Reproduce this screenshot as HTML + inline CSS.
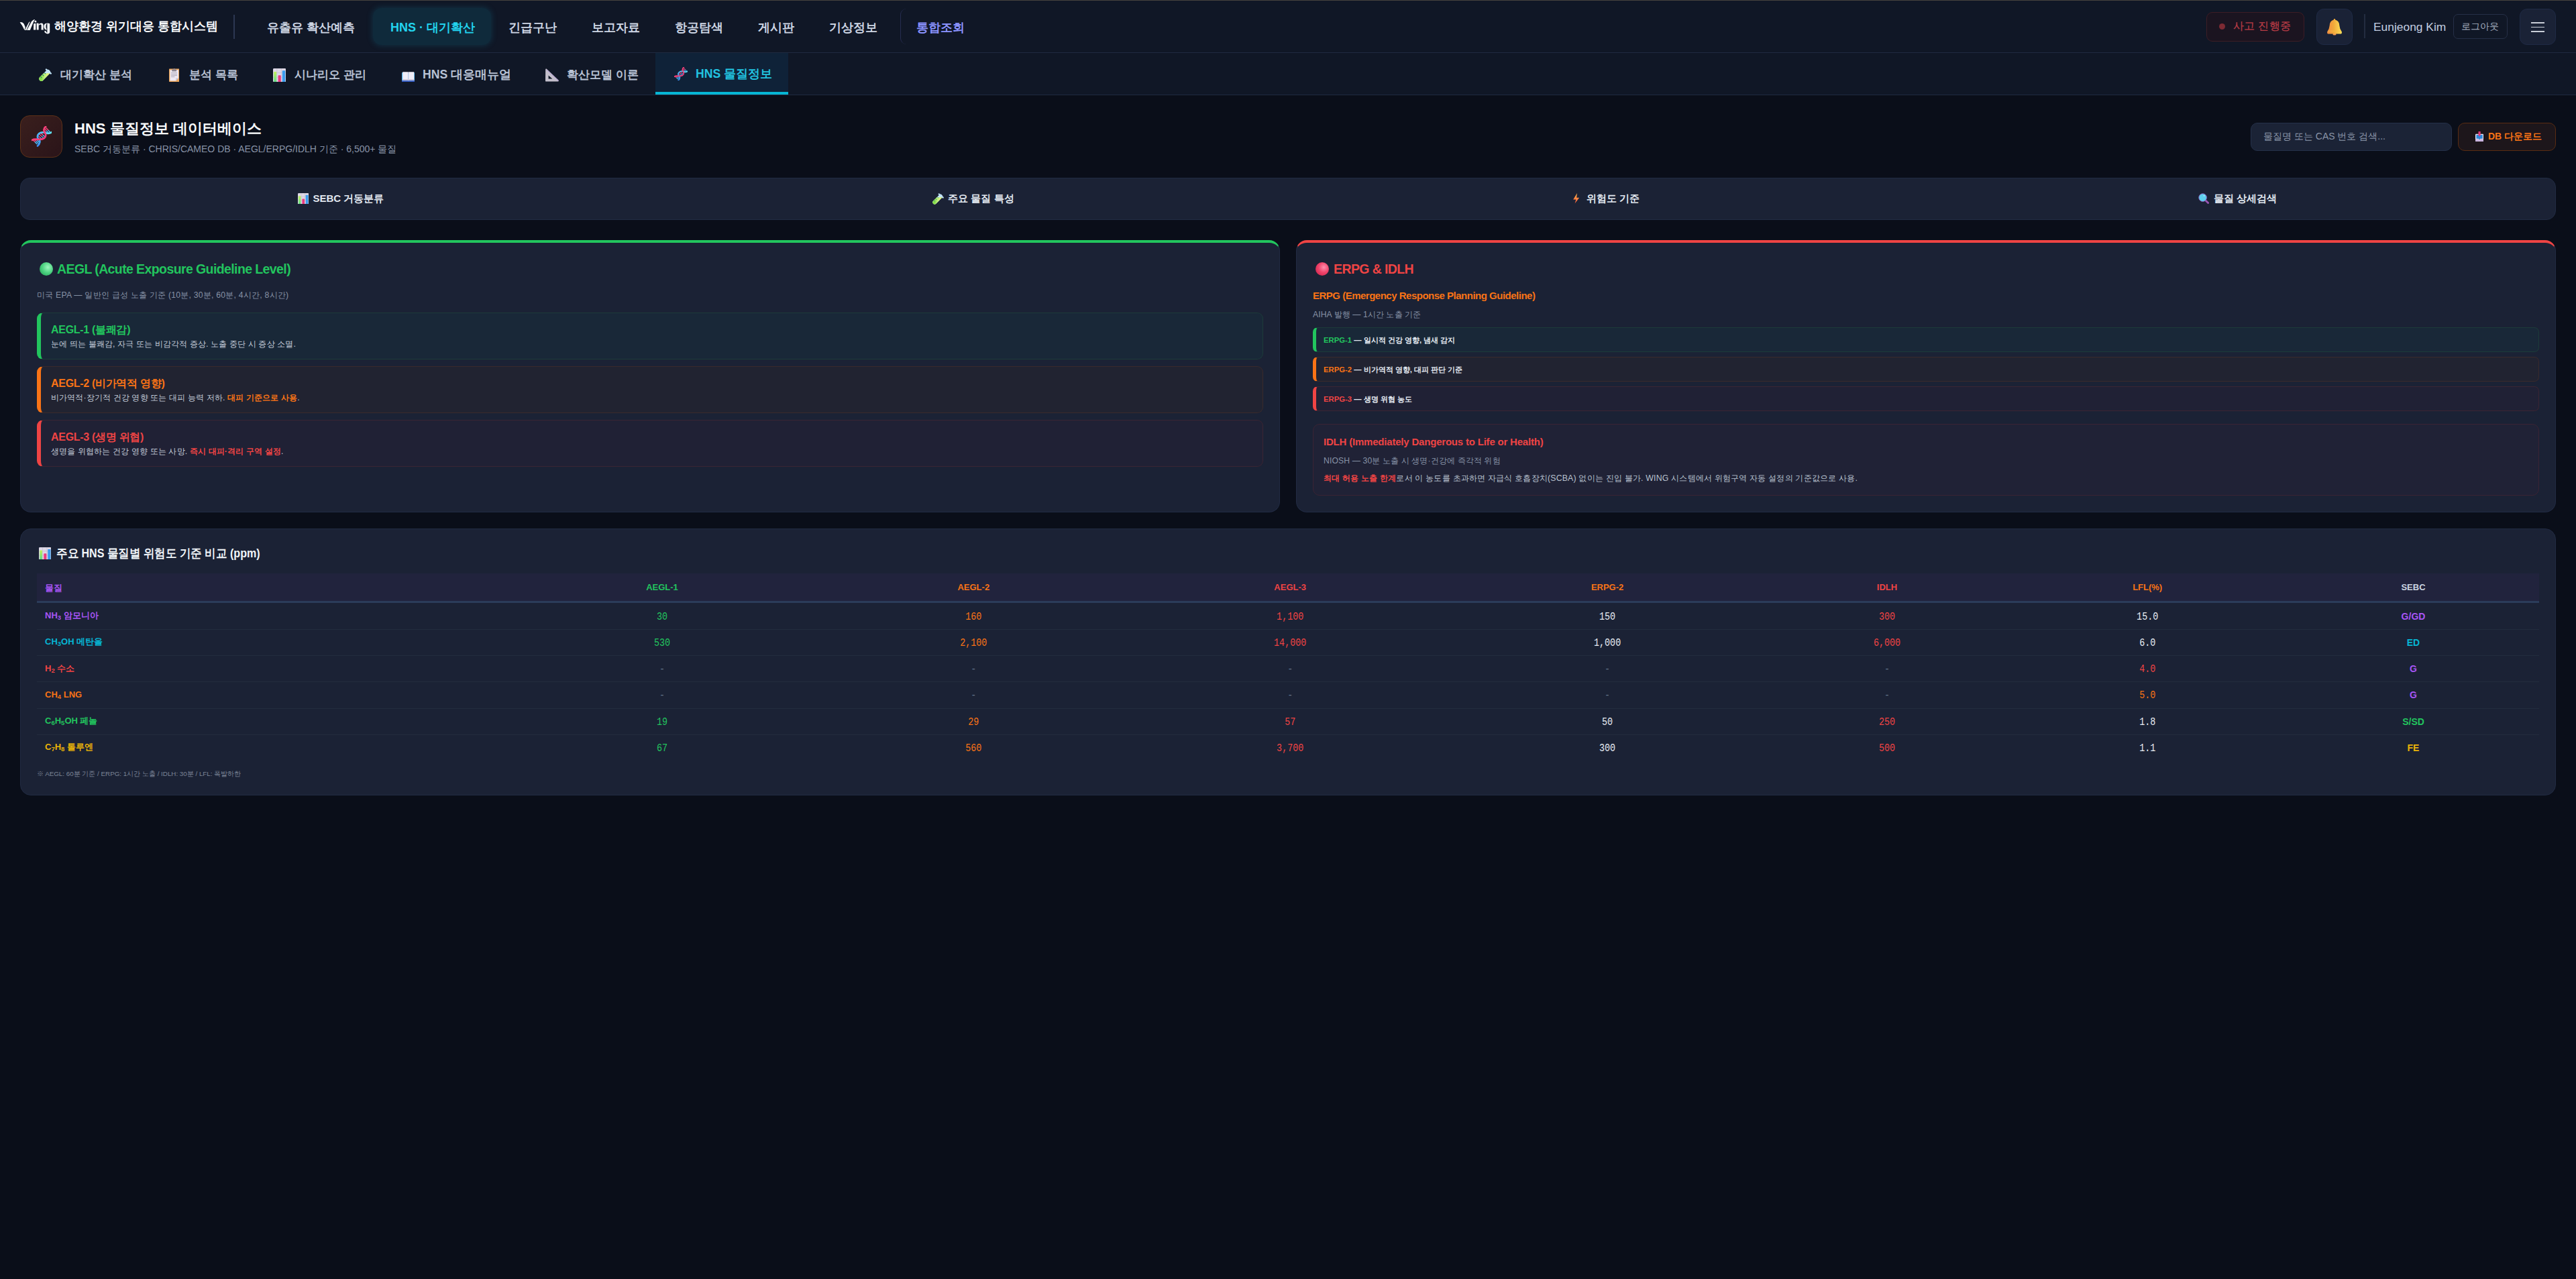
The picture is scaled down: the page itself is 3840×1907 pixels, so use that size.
<!DOCTYPE html>
<html lang="ko">
<head>
<meta charset="utf-8">
<title>WING HNS 물질정보</title>
<style>
*{box-sizing:border-box;margin:0;padding:0}
html,body{width:3840px;height:1907px;overflow:hidden;background:#0a0e19;font-family:"Liberation Sans",sans-serif;color:#e2e8f0}
.a{position:absolute}
.nw{position:absolute;white-space:nowrap}
.sx{display:inline-block;transform-origin:0 50%}
</style>
</head>
<body>
<div class="a" style="left:0px;top:0px;width:3840px;height:1px;background:#46433f"></div>
<div class="a" style="left:0px;top:1px;width:3840px;height:77px;background:#101726"></div>
<div class="a" style="left:0px;top:78px;width:3840px;height:1px;background:#1f2a40"></div>
<div class="a" style="left:0px;top:79px;width:3840px;height:62px;background:#101726"></div>
<div class="a" style="left:0px;top:141px;width:3840px;height:1px;background:#1f2a40"></div>
<svg class="a" style="left:26px;top:26px" width="54" height="28" viewBox="0 0 54 28"><g fill="#f8fafc">
<path d="M3.6,7.2 Q7.6,6.0 9.6,9.4 L11.8,14.4 L10.6,18.9 Q7.4,11.6 3.6,7.2 Z"/>
<path d="M10.9,18.9 L16.6,8.0 Q17.6,6.6 18.8,6.3 L13.4,18.9 Z"/>
<path d="M14.0,18.9 L18.8,18.9 L23.6,7.4 Q24.8,4.2 26.2,2.9 Q22.6,3.2 20.6,6.8 Z"/>
<circle cx="26.9" cy="6.0" r="1.5"/>
<path d="M24.2,9.2 L27.4,8.8 L27.3,18.6 L24.0,18.6 Z"/>
<path d="M28.6,8.6 L31.6,8.8 L31.6,18.6 L28.8,18.6 Z"/>
<path d="M31.6,10.4 Q33.6,8.4 36.0,8.6 Q38.6,9.0 38.6,11.8 L38.6,18.6 L35.6,18.6 L35.6,11.8 Q35.4,10.4 34.2,10.6 Q32.6,10.9 31.6,12.4 Z"/>
<path d="M43.2,8.5 Q39.3,9.4 39.3,13.6 Q39.5,18.0 43.6,18.6 L43.6,17.4 Q42.4,16.4 42.4,13.6 Q42.4,10.0 43.8,9.4 Z"/>
<path d="M44.4,8.3 L48.2,9.2 L48.2,22.2 Q47.8,24.2 45.2,24.4 Q41.0,24.4 40.0,20.6 L42.2,20.0 Q43.0,22.6 44.4,22.8 Z"/>
<path d="M34.8,17.2 L43.6,18.9 L43.6,19.3 L34.8,17.6 Z" opacity="0.6"/>
</g></svg>
<div id="h_title" class="nw" style="left:81px;top:23px;font-size:17.9px;line-height:32px;font-weight:700;color:#f8fafc">해양환경 위기대응 통합시스템</div>
<div class="a" style="left:348px;top:22px;width:2px;height:36px;background:#2c3752"></div>
<div class="a" style="left:556px;top:12px;width:176px;height:55px;border-radius:13px;background:#0f2a3b;box-shadow:0 0 8px 1px rgba(20,110,140,0.30)"></div>
<div class="a" style="left:1342px;top:13px;width:120px;height:53px;border-left:1.5px solid #262d50;border-radius:9px 0 0 9px"></div>
<div id="nav0" class="nw" style="left:398px;top:25px;font-size:18px;line-height:32px;font-weight:700;color:#cdd5e3">유출유 확산예측</div>
<div id="nav1" class="nw" style="left:582px;top:25px;font-size:18px;line-height:32px;font-weight:700;color:#22d3ee">HNS<span style="padding:0 5px">·</span>대기확산</div>
<div id="nav2" class="nw" style="left:758px;top:25px;font-size:18px;line-height:32px;font-weight:700;color:#cdd5e3">긴급구난</div>
<div id="nav3" class="nw" style="left:882px;top:25px;font-size:18px;line-height:32px;font-weight:700;color:#cdd5e3">보고자료</div>
<div id="nav4" class="nw" style="left:1006px;top:25px;font-size:18px;line-height:32px;font-weight:700;color:#cdd5e3">항공탐색</div>
<div id="nav5" class="nw" style="left:1130px;top:25px;font-size:18px;line-height:32px;font-weight:700;color:#cdd5e3">게시판</div>
<div id="nav6" class="nw" style="left:1236px;top:25px;font-size:18px;line-height:32px;font-weight:700;color:#cdd5e3">기상정보</div>
<div id="nav7" class="nw" style="left:1366px;top:25px;font-size:18px;line-height:32px;font-weight:700;color:#8b93ff">통합조회</div>
<div class="a" style="left:3289px;top:18px;width:146px;height:44px;border-radius:9px;background:#1b1420;border:1.5px solid #3d1d25"></div>
<div class="a" style="left:3308px;top:35px;width:9.2px;height:9.2px;border-radius:50%;background:#7d2a33"></div>
<div id="h_acc" class="nw" style="left:3328.5px;top:23.8px;font-size:16px;line-height:30px;color:#b83c46;letter-spacing:0.5px;-webkit-text-stroke:0.25px #b83c46">사고 진행중</div>
<div class="a" style="left:3453px;top:13px;width:54px;height:54px;border-radius:11px;background:#1a2236;border:1.5px solid #1f2a45"></div>
<svg class="a" style="left:3469px;top:28px" width="22" height="24.7" viewBox="0 0 22 24.7" preserveAspectRatio="none"><defs><linearGradient id="bgb" x1="0" y1="0" x2="1" y2="0"><stop offset="0" stop-color="#f08a40"/><stop offset="0.45" stop-color="#f2aa3a"/><stop offset="1" stop-color="#ffe35a"/></linearGradient></defs><ellipse cx="11" cy="23" rx="2.6" ry="1.6" fill="#f29a5a"/><path d="M11,0 Q12.2,0 12.2,1.4 Q18.2,3 18.4,10.4 Q18.8,15.6 22,19.8 Q22,22.6 20.6,22.6 H1.4 Q0,22.6 0,19.8 Q3.2,15.6 3.6,10.4 Q3.8,3 9.8,1.4 Q9.8,0 11,0 Z" fill="url(#bgb)"/><rect x="1.2" y="17.6" width="19.6" height="1.6" fill="#f6c04a" opacity="0.5"/></svg>
<div class="a" style="left:3524px;top:21px;width:1.5px;height:36px;background:#232c40"></div>
<div id="h_user" class="nw" style="left:3538px;top:25px;font-size:17.4px;line-height:30px;color:#c3cee0">Eunjeong Kim</div>
<div class="a" style="left:3657px;top:21px;width:81px;height:37px;border-radius:7px;border:1.5px solid #263047"></div>
<div id="h_logout" class="nw" style="left:3669px;top:24px;font-size:14.2px;line-height:30px;color:#a7b0c0">로그아웃</div>
<div class="a" style="left:3756px;top:13px;width:54px;height:54px;border-radius:11px;background:#1a2236;border:1.5px solid #1f2a45"></div>
<div class="a" style="left:3773px;top:33px;width:20px;height:1.8px;background:#c9ced8"></div>
<div class="a" style="left:3773px;top:39.5px;width:20px;height:1.8px;background:#c9ced8"></div>
<div class="a" style="left:3773px;top:46px;width:20px;height:1.8px;background:#c9ced8"></div>
<div class="a" style="left:977px;top:79px;width:198px;height:62px;background:#0f2238"></div>
<div class="a" style="left:977px;top:137px;width:198px;height:4px;background:#06b6d4"></div>
<svg class="a" style="left:57.9px;top:102.4px" width="19.2" height="19.4" viewBox="0 0 20 20" preserveAspectRatio="none"><defs><linearGradient id="ttg57" x1="0" y1="0" x2="1" y2="0"><stop offset="0" stop-color="#86dc48"/><stop offset="0.5" stop-color="#c0f07e"/><stop offset="1" stop-color="#e4f27a"/></linearGradient><clipPath id="ttc57"><rect x="0" y="7.4" width="20" height="13"/></clipPath></defs><line x1="3.8" y1="16.0" x2="14.2" y2="5.6" stroke="#c6e6f8" stroke-width="7" stroke-linecap="round"/><line x1="11.4" y1="1.6" x2="18.6" y2="7.8" stroke="#bfe2f6" stroke-width="2.4" stroke-linecap="round"/><line x1="3.8" y1="16.0" x2="14.2" y2="5.6" stroke="url(#ttg57)" stroke-width="7" stroke-linecap="round" clip-path="url(#ttc57)"/><g stroke="#1f7f78" stroke-width="1.1" stroke-linecap="round"><line x1="3.0" y1="13.0" x2="4.2" y2="14.2"/><line x1="6.0" y1="10.0" x2="7.2" y2="11.2"/><line x1="9.0" y1="7.0" x2="10.2" y2="8.2"/></g></svg>
<div id="snt0" class="nw" style="left:90px;top:95.5px;font-size:17.15px;line-height:30px;font-weight:700;color:#b8c2d4">대기확산 분석</div>
<svg class="a" style="left:251.9px;top:102px" width="15.4" height="20" viewBox="0 0 15.4 20" preserveAspectRatio="none"><rect x="0" y="0.6" width="15.4" height="19.4" rx="0.8" fill="#eaa55c"/><path d="M1.4,2.2 H14 V14.4 L10.2,18.4 H1.4 Z" fill="#ece8f4"/><path d="M10.2,18.4 L14,14.4 H10.6 Q10.2,14.4 10.2,15 Z" fill="#c9c3d6"/><rect x="4.2" y="1.4" width="7" height="3" rx="0.6" fill="#8d8794"/><rect x="6.9" y="0" width="1.6" height="1.8" fill="#8d8794"/><g fill="#a9a3b3"><rect x="3" y="6.2" width="9" height="0.9"/><rect x="3" y="8.3" width="9" height="0.9"/><rect x="3" y="10.2" width="9" height="0.9"/><rect x="3" y="12.2" width="5.4" height="0.9"/></g></svg>
<div id="snt1" class="nw" style="left:282px;top:95.5px;font-size:17.15px;line-height:30px;font-weight:700;color:#b8c2d4">분석 목록</div>
<svg class="a" style="left:406.9px;top:101.8px" width="19.2" height="20.2" viewBox="0 0 19.2 20" preserveAspectRatio="none"><defs><linearGradient id="cg406_9" x1="0" y1="0" x2="0" y2="1"><stop offset="0" stop-color="#c2f25c"/><stop offset="1" stop-color="#5ddc86"/></linearGradient></defs><rect x="0" y="0" width="19.2" height="20" rx="1.4" fill="#ddd8e6"/><g stroke="#bdb6c8" stroke-width="0.5"><line x1="0" y1="6.4" x2="19.2" y2="6.4"/><line x1="0" y1="13.2" x2="19.2" y2="13.2"/><line x1="5.8" y1="0" x2="5.8" y2="20"/><line x1="12.4" y1="0" x2="12.4" y2="20"/></g><rect x="1.2" y="5" width="4" height="15" rx="0.6" fill="url(#cg406_9)"/><rect x="7.6" y="10.2" width="4.2" height="9.8" rx="0.8" fill="#ec3a80"/><rect x="13.8" y="3.2" width="4.4" height="16.8" rx="0.6" fill="#3a9cee"/></svg>
<div id="snt2" class="nw" style="left:439px;top:95.5px;font-size:17.15px;line-height:30px;font-weight:700;color:#b8c2d4">시나리오 관리</div>
<svg class="a" style="left:598.9px;top:106.7px" width="19.4" height="15.5" viewBox="0 0 19.4 15.6" preserveAspectRatio="none"><path d="M0,1.2 H19.4 V15 H10.4 L9.7,15.6 L9,15 H0 Z" fill="#4fb6f2"/><path d="M0,13.2 H19.4 V15 H10.4 L9.7,15.6 L9,15 H0 Z" fill="#3a62c8"/><path d="M1.2,0.2 H9.3 V13.4 L9.7,13.9 L10.1,13.4 V0.2 H18.2 V12.8 H10.6 L9.7,13.8 L8.8,12.8 H1.2 Z" fill="#efedf7"/><rect x="1.2" y="11.2" width="17" height="1.6" fill="#c7bfd6"/><rect x="9.3" y="0.2" width="0.8" height="13" fill="#cfcae0"/></svg>
<div id="snt3" class="nw" style="left:630px;top:95.5px;font-size:17.6px;line-height:30px;font-weight:700;color:#b8c2d4">HNS 대응매뉴얼</div>
<svg class="a" style="left:813px;top:102px" width="20" height="19.8" viewBox="0 0 20 20" preserveAspectRatio="none"><path d="M0.2,1.4 Q0.4,0 1.6,0.6 L19.6,17.6 Q20.4,19.8 18.6,19.8 H1.2 Q0,19.8 0,18.6 Z M4.6,10.6 V15.6 H10.4 Z" fill="#c3bfcb" fill-rule="evenodd"/><circle cx="2.40" cy="2.60" r="0.55" fill="#a070f0"/><circle cx="4.45" cy="4.50" r="0.55" fill="#a070f0"/><circle cx="6.50" cy="6.40" r="0.55" fill="#a070f0"/><circle cx="8.55" cy="8.30" r="0.55" fill="#a070f0"/><circle cx="10.60" cy="10.20" r="0.55" fill="#a070f0"/><circle cx="12.65" cy="12.10" r="0.55" fill="#a070f0"/><circle cx="14.70" cy="14.00" r="0.55" fill="#a070f0"/><circle cx="16.75" cy="15.90" r="0.55" fill="#a070f0"/><circle cx="18.80" cy="17.80" r="0.55" fill="#a070f0"/></svg>
<div id="snt4" class="nw" style="left:845px;top:95.5px;font-size:17.15px;line-height:30px;font-weight:700;color:#b8c2d4">확산모델 이론</div>
<svg class="a" style="left:1004.5px;top:99.8px" width="20.5" height="20.5" viewBox="0 0 30 30" preserveAspectRatio="none"><defs><linearGradient id="dps" x1="0" y1="0" x2="1" y2="1"><stop offset="0" stop-color="#ff4a78"/><stop offset="1" stop-color="#f0367a"/></linearGradient><linearGradient id="dbs" x1="1" y1="0" x2="0" y2="1"><stop offset="0" stop-color="#62e8f6"/><stop offset="1" stop-color="#3a8ef8"/></linearGradient></defs><g stroke-width="1.5" stroke-linecap="butt"><line x1="19.4" y1="4.0" x2="22.00" y2="6.95" stroke="#f0467e"/><line x1="22.00" y1="6.95" x2="24.6" y2="9.9" stroke="#4ab8f6"/><line x1="18.6" y1="6.6" x2="20.30" y2="8.30" stroke="#f0467e"/><line x1="20.30" y1="8.30" x2="22.0" y2="10.0" stroke="#4ab8f6"/><line x1="21.2" y1="2.4" x2="24.40" y2="6.00" stroke="#f0467e"/><line x1="24.40" y1="6.00" x2="27.6" y2="9.6" stroke="#4ab8f6"/><line x1="11.0" y1="11.6" x2="14.80" y2="15.00" stroke="#f0467e"/><line x1="14.80" y1="15.00" x2="18.6" y2="18.4" stroke="#4ab8f6"/><line x1="9.6" y1="14.0" x2="12.50" y2="16.70" stroke="#f0467e"/><line x1="12.50" y1="16.70" x2="15.4" y2="19.4" stroke="#4ab8f6"/><line x1="13.4" y1="10.0" x2="16.80" y2="13.10" stroke="#f0467e"/><line x1="16.80" y1="13.10" x2="20.2" y2="16.2" stroke="#4ab8f6"/><line x1="3.4" y1="18.8" x2="6.80" y2="22.20" stroke="#f0467e"/><line x1="6.80" y1="22.20" x2="10.2" y2="25.6" stroke="#4ab8f6"/><line x1="6.4" y1="18.8" x2="8.70" y2="21.00" stroke="#f0467e"/><line x1="8.70" y1="21.00" x2="11.0" y2="23.2" stroke="#4ab8f6"/><line x1="1.6" y1="19.6" x2="4.90" y2="23.10" stroke="#f0467e"/><line x1="4.90" y1="23.10" x2="8.2" y2="26.6" stroke="#4ab8f6"/></g><g stroke-width="2.6" fill="none" stroke-linecap="round"><path d="M29.6,9 C27,11 22.6,11 19.3,9.6 C15.4,8.4 10.8,9.8 9.2,13.2 C8,16.2 9.4,18.6 11.3,19.5 C12.8,21.5 12.6,26 8.9,29.1" stroke="url(#dbs)"/><path d="M20.8,0.9 C18,2.6 17.2,7 19.3,9.6 C21.6,12 21.4,15.6 18.5,17.8 C16,19.6 13.6,19.6 11.3,19.5 C7.6,19.2 3,18.6 0.6,20.6" stroke="url(#dps)"/></g></svg>
<div id="snt5" class="nw" style="left:1037px;top:94.5px;font-size:17.6px;line-height:30px;font-weight:700;color:#22c3e0">HNS 물질정보</div>
<div class="a" style="left:30px;top:172px;width:63px;height:63px;border-radius:14px;background:linear-gradient(135deg,#3a1f1d,#2a1419);border:1.5px solid #5e3118"></div>
<svg class="a" style="left:46.5px;top:188.2px" width="30.5" height="30.5" viewBox="0 0 30 30" preserveAspectRatio="none"><defs><linearGradient id="dpp" x1="0" y1="0" x2="1" y2="1"><stop offset="0" stop-color="#ff4a78"/><stop offset="1" stop-color="#f0367a"/></linearGradient><linearGradient id="dbp" x1="1" y1="0" x2="0" y2="1"><stop offset="0" stop-color="#62e8f6"/><stop offset="1" stop-color="#3a8ef8"/></linearGradient></defs><g stroke-width="1.5" stroke-linecap="butt"><line x1="19.4" y1="4.0" x2="22.00" y2="6.95" stroke="#f0467e"/><line x1="22.00" y1="6.95" x2="24.6" y2="9.9" stroke="#4ab8f6"/><line x1="18.6" y1="6.6" x2="20.30" y2="8.30" stroke="#f0467e"/><line x1="20.30" y1="8.30" x2="22.0" y2="10.0" stroke="#4ab8f6"/><line x1="21.2" y1="2.4" x2="24.40" y2="6.00" stroke="#f0467e"/><line x1="24.40" y1="6.00" x2="27.6" y2="9.6" stroke="#4ab8f6"/><line x1="11.0" y1="11.6" x2="14.80" y2="15.00" stroke="#f0467e"/><line x1="14.80" y1="15.00" x2="18.6" y2="18.4" stroke="#4ab8f6"/><line x1="9.6" y1="14.0" x2="12.50" y2="16.70" stroke="#f0467e"/><line x1="12.50" y1="16.70" x2="15.4" y2="19.4" stroke="#4ab8f6"/><line x1="13.4" y1="10.0" x2="16.80" y2="13.10" stroke="#f0467e"/><line x1="16.80" y1="13.10" x2="20.2" y2="16.2" stroke="#4ab8f6"/><line x1="3.4" y1="18.8" x2="6.80" y2="22.20" stroke="#f0467e"/><line x1="6.80" y1="22.20" x2="10.2" y2="25.6" stroke="#4ab8f6"/><line x1="6.4" y1="18.8" x2="8.70" y2="21.00" stroke="#f0467e"/><line x1="8.70" y1="21.00" x2="11.0" y2="23.2" stroke="#4ab8f6"/><line x1="1.6" y1="19.6" x2="4.90" y2="23.10" stroke="#f0467e"/><line x1="4.90" y1="23.10" x2="8.2" y2="26.6" stroke="#4ab8f6"/></g><g stroke-width="2.6" fill="none" stroke-linecap="round"><path d="M29.6,9 C27,11 22.6,11 19.3,9.6 C15.4,8.4 10.8,9.8 9.2,13.2 C8,16.2 9.4,18.6 11.3,19.5 C12.8,21.5 12.6,26 8.9,29.1" stroke="url(#dbp)"/><path d="M20.8,0.9 C18,2.6 17.2,7 19.3,9.6 C21.6,12 21.4,15.6 18.5,17.8 C16,19.6 13.6,19.6 11.3,19.5 C7.6,19.2 3,18.6 0.6,20.6" stroke="url(#dpp)"/></g></svg>
<div id="p_title" class="nw" style="left:111px;top:176px;font-size:22px;line-height:32px;font-weight:700;color:#f8fafc">HNS 물질정보 데이터베이스</div>
<div id="p_sub" class="nw" style="left:111px;top:212px;font-size:14px;line-height:20px;color:#8792a6">SEBC 거동분류 · CHRIS/CAMEO DB · AEGL/ERPG/IDLH 기준 · 6,500+ 물질</div>
<div class="a" style="left:3355px;top:183px;width:300px;height:42px;border-radius:10px;background:#1b2336;border:1.5px solid #243049"></div>
<div id="p_search" class="nw" style="left:3374px;top:193px;font-size:14px;line-height:20px;color:#8b96a9">물질명 또는 CAS 번호 검색...</div>
<div class="a" style="left:3664px;top:183px;width:146px;height:42px;border-radius:10px;background:#1d161b;border:1.5px solid #5a2c12"></div>
<svg class="a" style="left:3690px;top:196px" width="12.2" height="15" viewBox="0 0 12.2 15" preserveAspectRatio="none"><rect x="0" y="3.8" width="12.2" height="11.2" rx="1" fill="#e6e2ef"/><path d="M1.4,5 H10.8 V10.8 H7.6 L6.1,12.4 L4.6,10.8 H1.4 Z" fill="#2e88dc"/><path d="M0,11.6 H4.4 L6.1,13 L7.8,11.6 H12.2 V14 Q12.2,15 11.2,15 H1 Q0,15 0,14 Z" fill="#c9b4e0"/><path d="M4.5,0 H7.7 V5.6 L6.1,7.4 L4.5,5.6 Z" fill="#e23a7a"/></svg>
<div id="p_dl" class="nw" style="left:3709px;top:193px;font-size:14px;line-height:20px;font-weight:700;color:#f97316">DB 다운로드</div>
<div class="a" style="left:30px;top:265px;width:3780px;height:63px;border-radius:14px;background:#1b2235;border:1.5px solid #212b42"></div>
<svg class="a" style="left:443.5px;top:287.6px" width="16.3" height="16.8" viewBox="0 0 19.2 20" preserveAspectRatio="none"><defs><linearGradient id="cg443_5" x1="0" y1="0" x2="0" y2="1"><stop offset="0" stop-color="#c2f25c"/><stop offset="1" stop-color="#5ddc86"/></linearGradient></defs><rect x="0" y="0" width="19.2" height="20" rx="1.4" fill="#ddd8e6"/><g stroke="#bdb6c8" stroke-width="0.5"><line x1="0" y1="6.4" x2="19.2" y2="6.4"/><line x1="0" y1="13.2" x2="19.2" y2="13.2"/><line x1="5.8" y1="0" x2="5.8" y2="20"/><line x1="12.4" y1="0" x2="12.4" y2="20"/></g><rect x="1.2" y="5" width="4" height="15" rx="0.6" fill="url(#cg443_5)"/><rect x="7.6" y="10.2" width="4.2" height="9.8" rx="0.8" fill="#ec3a80"/><rect x="13.8" y="3.2" width="4.4" height="16.8" rx="0.6" fill="#3a9cee"/></svg>
<svg class="a" style="left:1390px;top:288px" width="17" height="17" viewBox="0 0 20 20" preserveAspectRatio="none"><defs><linearGradient id="ttg1390" x1="0" y1="0" x2="1" y2="0"><stop offset="0" stop-color="#86dc48"/><stop offset="0.5" stop-color="#c0f07e"/><stop offset="1" stop-color="#e4f27a"/></linearGradient><clipPath id="ttc1390"><rect x="0" y="7.4" width="20" height="13"/></clipPath></defs><line x1="3.8" y1="16.0" x2="14.2" y2="5.6" stroke="#c6e6f8" stroke-width="7" stroke-linecap="round"/><line x1="11.4" y1="1.6" x2="18.6" y2="7.8" stroke="#bfe2f6" stroke-width="2.4" stroke-linecap="round"/><line x1="3.8" y1="16.0" x2="14.2" y2="5.6" stroke="url(#ttg1390)" stroke-width="7" stroke-linecap="round" clip-path="url(#ttc1390)"/><g stroke="#1f7f78" stroke-width="1.1" stroke-linecap="round"><line x1="3.0" y1="13.0" x2="4.2" y2="14.2"/><line x1="6.0" y1="10.0" x2="7.2" y2="11.2"/><line x1="9.0" y1="7.0" x2="10.2" y2="8.2"/></g></svg>
<svg class="a" style="left:2344.9px;top:288px" width="9.3" height="15.6" viewBox="0 0 9.4 15.6" preserveAspectRatio="none"><defs><linearGradient id="zgz" x1="0" y1="0" x2="0" y2="1"><stop offset="0" stop-color="#ffb347"/><stop offset="1" stop-color="#ff5a3c"/></linearGradient></defs><path d="M6,0 L0.2,9.4 H4.4 L2.6,15.6 L9.2,6.8 H5.2 Z" fill="url(#zgz)"/></svg>
<svg class="a" style="left:3277px;top:288px" width="16.2" height="16" viewBox="0 0 16.2 16" preserveAspectRatio="none"><line x1="11.2" y1="11.2" x2="14.6" y2="14.6" stroke="#9a56b4" stroke-width="2.8" stroke-linecap="round"/><circle cx="6.6" cy="6.6" r="5.9" fill="#5fd0ee" stroke="#8a58b8" stroke-width="0.9"/><circle cx="8.6" cy="3.8" r="0.9" fill="#dff6ff" opacity="0.8"/></svg>
<div id="tab0" class="nw" style="left:466.5px;top:285px;font-size:15px;line-height:22px;font-weight:700;color:#e2e8f0">SEBC 거동분류</div>
<div id="tab1" class="nw" style="left:1413.3px;top:285px;font-size:15px;line-height:22px;font-weight:700;color:#e2e8f0">주요 물질 특성</div>
<div id="tab2" class="nw" style="left:2365px;top:285px;font-size:15px;line-height:22px;font-weight:700;color:#e2e8f0">위험도 기준</div>
<div id="tab3" class="nw" style="left:3300px;top:285px;font-size:15px;line-height:22px;font-weight:700;color:#e2e8f0">물질 상세검색</div>
<div class="a" style="left:30px;top:357.5px;width:1878px;height:406.5px;border-radius:16px;background:#1b2235;border:1.5px solid #212b43;border-top:4.5px solid #22c55e"></div>
<div class="a" style="left:1932px;top:357.5px;width:1878px;height:406.5px;border-radius:16px;background:#1b2235;border:1.5px solid #212b43;border-top:4.5px solid #ef4444"></div>
<div class="a" style="left:59px;top:391px;width:20px;height:20px;border-radius:50%;background:radial-gradient(circle at 62% 38%,#9ef5bd 0%,#4fd483 45%,#2fae62 80%,#2a8f55 100%)"></div>
<div id="l_title" class="nw" style="left:85px;top:386px;font-size:19.5px;line-height:30px;font-weight:700;color:#22c55e;letter-spacing:-0.6px">AEGL (Acute Exposure Guideline Level)</div>
<div id="l_sub" class="nw" style="left:55px;top:429px;font-size:12.2px;line-height:22px;color:#8792a6;letter-spacing:0.24px">미국 EPA — 일반인 급성 노출 기준 (10분, 30분, 60분, 4시간, 8시간)</div>
<div class="a" style="left:55px;top:466px;width:1828px;height:70px;border-radius:9px;background:#192838;border:1.5px solid #1d3b3a;border-left:6px solid #22c55e"></div>
<div id="lv_t0" class="nw" style="left:76px;top:480px;font-size:16px;line-height:24px;font-weight:700;color:#22c55e;letter-spacing:-0.3px">AEGL-1 (불쾌감)</div>
<div id="lv_d0" class="nw" style="left:76px;top:502px;font-size:12.3px;line-height:22px;color:#c3cbd8;letter-spacing:0.13px">눈에 띄는 불쾌감, 자극 또는 비감각적 증상. 노출 중단 시 증상 소멸.</div>
<div class="a" style="left:55px;top:546px;width:1828px;height:70px;border-radius:9px;background:#212331;border:1.5px solid #3a2a2c;border-left:6px solid #f97316"></div>
<div id="lv_t1" class="nw" style="left:76px;top:560px;font-size:16px;line-height:24px;font-weight:700;color:#f97316;letter-spacing:-0.3px">AEGL-2 (비가역적 영향)</div>
<div id="lv_d1" class="nw" style="left:76px;top:582px;font-size:12.3px;line-height:22px;color:#c3cbd8;letter-spacing:0.13px">비가역적·장기적 건강 영향 또는 대피 능력 저하. <b style="color:#f97316">대피 기준으로 사용</b>.</div>
<div class="a" style="left:55px;top:626px;width:1828px;height:70px;border-radius:9px;background:#202135;border:1.5px solid #3a2533;border-left:6px solid #ef4444"></div>
<div id="lv_t2" class="nw" style="left:76px;top:640px;font-size:16px;line-height:24px;font-weight:700;color:#ef4444;letter-spacing:-0.3px">AEGL-3 (생명 위협)</div>
<div id="lv_d2" class="nw" style="left:76px;top:662px;font-size:12.3px;line-height:22px;color:#c3cbd8;letter-spacing:0.13px">생명을 위협하는 건강 영향 또는 사망. <b style="color:#ef4444">즉시 대피·격리 구역 설정</b>.</div>
<div class="a" style="left:1961px;top:391px;width:20px;height:20px;border-radius:50%;background:radial-gradient(circle at 62% 38%,#ff8fae 0%,#f0436a 45%,#d42a52 80%,#b8213f 100%)"></div>
<div id="r_title" class="nw" style="left:1988px;top:386px;font-size:19.5px;line-height:30px;font-weight:700;color:#ef4444;letter-spacing:-0.6px">ERPG &amp; IDLH</div>
<div id="r_erpg" class="nw" style="left:1957px;top:430px;font-size:15px;line-height:22px;font-weight:700;color:#f97316;letter-spacing:-0.5px">ERPG (Emergency Response Planning Guideline)</div>
<div id="r_aiha" class="nw" style="left:1957px;top:458px;font-size:12.15px;line-height:22px;color:#8792a6;letter-spacing:0.1px">AIHA 발행 — 1시간 노출 기준</div>
<div class="a" style="left:1957px;top:488px;width:1828px;height:37px;border-radius:7px;background:#192838;border:1.5px solid #1d3b3a;border-left:5px solid #22c55e"></div>
<div id="er0" class="nw" style="left:1973px;top:496px;font-size:11.3px;line-height:22px;font-weight:700;color:#e2e8f0"><span style="color:#22c55e">ERPG-1</span> — 일시적 건강 영향, 냄새 감지</div>
<div class="a" style="left:1957px;top:532px;width:1828px;height:37px;border-radius:7px;background:#212331;border:1.5px solid #3a2a2c;border-left:5px solid #f97316"></div>
<div id="er1" class="nw" style="left:1973px;top:540px;font-size:11.3px;line-height:22px;font-weight:700;color:#e2e8f0"><span style="color:#f97316">ERPG-2</span> — 비가역적 영향, 대피 판단 기준</div>
<div class="a" style="left:1957px;top:576px;width:1828px;height:37px;border-radius:7px;background:#202135;border:1.5px solid #3a2533;border-left:5px solid #ef4444"></div>
<div id="er2" class="nw" style="left:1973px;top:584px;font-size:11.3px;line-height:22px;font-weight:700;color:#e2e8f0"><span style="color:#ef4444">ERPG-3</span> — 생명 위협 농도</div>
<div class="a" style="left:1957px;top:632px;width:1828px;height:107px;border-radius:10px;background:#202236;border:1.5px solid #3a2434"></div>
<div id="r_idlh" class="nw" style="left:1973px;top:648px;font-size:15px;line-height:22px;font-weight:700;color:#ef4444;letter-spacing:-0.2px">IDLH (Immediately Dangerous to Life or Health)</div>
<div id="r_niosh" class="nw" style="left:1973px;top:676px;font-size:12.2px;line-height:22px;color:#8792a6;letter-spacing:0.12px">NIOSH — 30분 노출 시 생명·건강에 즉각적 위험</div>
<div id="r_last" class="nw" style="left:1973px;top:702px;font-size:12.3px;line-height:22px;color:#b9c2d0;letter-spacing:0.2px"><b style="color:#ef4444">최대 허용 노출 한계</b>로서 이 농도를 초과하면 자급식 호흡장치(SCBA) 없이는 진입 불가. WING 시스템에서 위험구역 자동 설정의 기준값으로 사용.</div>
<div class="a" style="left:30px;top:788px;width:3780px;height:398px;border-radius:16px;background:#1b2235;border:1.5px solid #212b43"></div>
<svg class="a" style="left:57.8px;top:815.8px" width="18.4" height="18.2" viewBox="0 0 19.2 20" preserveAspectRatio="none"><defs><linearGradient id="cg57_8" x1="0" y1="0" x2="0" y2="1"><stop offset="0" stop-color="#c2f25c"/><stop offset="1" stop-color="#5ddc86"/></linearGradient></defs><rect x="0" y="0" width="19.2" height="20" rx="1.4" fill="#ddd8e6"/><g stroke="#bdb6c8" stroke-width="0.5"><line x1="0" y1="6.4" x2="19.2" y2="6.4"/><line x1="0" y1="13.2" x2="19.2" y2="13.2"/><line x1="5.8" y1="0" x2="5.8" y2="20"/><line x1="12.4" y1="0" x2="12.4" y2="20"/></g><rect x="1.2" y="5" width="4" height="15" rx="0.6" fill="url(#cg57_8)"/><rect x="7.6" y="10.2" width="4.2" height="9.8" rx="0.8" fill="#ec3a80"/><rect x="13.8" y="3.2" width="4.4" height="16.8" rx="0.6" fill="#3a9cee"/></svg>
<div id="t_title" class="nw" style="left:84px;top:810px;font-size:17.5px;line-height:30px;font-weight:700;color:#f1f5f9"><span class="sx" style="transform:scaleX(0.918)">주요 HNS 물질별 위험도 기준 비교 (ppm)</span></div>
<div class="a" style="left:55px;top:855px;width:3730px;height:41px;background:#21233d"></div>
<div class="a" style="left:55px;top:896px;width:3730px;height:3px;background:#2b3c5a"></div>
<div id="th0" class="nw" style="left:67px;top:865.5px;font-size:12.5px;line-height:22px;font-weight:700;color:#a855f7">물질</div>
<div class="nw" style="left:887px;width:200px;text-align:center;top:864.5px;font-size:13px;line-height:22px;font-weight:700;color:#22c55e">AEGL-1</div>
<div class="nw" style="left:1351.3px;width:200px;text-align:center;top:864.5px;font-size:13px;line-height:22px;font-weight:700;color:#f97316">AEGL-2</div>
<div class="nw" style="left:1823.2px;width:200px;text-align:center;top:864.5px;font-size:13px;line-height:22px;font-weight:700;color:#ef4444">AEGL-3</div>
<div class="nw" style="left:2296.1px;width:200px;text-align:center;top:864.5px;font-size:13px;line-height:22px;font-weight:700;color:#f97316">ERPG-2</div>
<div class="nw" style="left:2713px;width:200px;text-align:center;top:864.5px;font-size:13px;line-height:22px;font-weight:700;color:#ef4444">IDLH</div>
<div class="nw" style="left:3101.2px;width:200px;text-align:center;top:864.5px;font-size:13px;line-height:22px;font-weight:700;color:#f97316">LFL(%)</div>
<div class="nw" style="left:3497.5px;width:200px;text-align:center;top:864.5px;font-size:13px;line-height:22px;font-weight:700;color:#cbd5e1">SEBC</div>
<div id="rn0" class="nw" style="left:67px;top:907.0px;font-size:13px;line-height:22px;font-weight:700;color:#a855f7">NH<span style="font-size:9.5px;vertical-align:-1.5px">3</span> 암모니아</div>
<div class="nw" style="left:887px;width:200px;text-align:center;top:908.5px;font-family:'Liberation Mono',monospace;font-size:13.4px;line-height:22px;color:#22c55e"><span style="display:inline-block;transform:scaleY(1.18)">30</span></div>
<div class="nw" style="left:1351.3px;width:200px;text-align:center;top:908.5px;font-family:'Liberation Mono',monospace;font-size:13.4px;line-height:22px;color:#f97316"><span style="display:inline-block;transform:scaleY(1.18)">160</span></div>
<div class="nw" style="left:1823.2px;width:200px;text-align:center;top:908.5px;font-family:'Liberation Mono',monospace;font-size:13.4px;line-height:22px;color:#ef4444"><span style="display:inline-block;transform:scaleY(1.18)">1,100</span></div>
<div class="nw" style="left:2296.1px;width:200px;text-align:center;top:908.5px;font-family:'Liberation Mono',monospace;font-size:13.4px;line-height:22px;color:#e8edf4"><span style="display:inline-block;transform:scaleY(1.18)">150</span></div>
<div class="nw" style="left:2713px;width:200px;text-align:center;top:908.5px;font-family:'Liberation Mono',monospace;font-size:13.4px;line-height:22px;color:#ef4444"><span style="display:inline-block;transform:scaleY(1.18)">300</span></div>
<div class="nw" style="left:3101.2px;width:200px;text-align:center;top:908.5px;font-family:'Liberation Mono',monospace;font-size:13.4px;line-height:22px;color:#e8edf4"><span style="display:inline-block;transform:scaleY(1.18)">15.0</span></div>
<div class="nw" style="left:3497.5px;width:200px;text-align:center;top:907.5px;font-size:14px;line-height:22px;font-weight:700;color:#a855f7">G/GD</div>
<div class="a" style="left:55px;top:937.75px;width:3730px;height:1px;background:#232c3e"></div>
<div id="rn1" class="nw" style="left:67px;top:946.25px;font-size:13px;line-height:22px;font-weight:700;color:#06b6d4">CH<span style="font-size:9.5px;vertical-align:-1.5px">3</span>OH 메탄올</div>
<div class="nw" style="left:887px;width:200px;text-align:center;top:947.75px;font-family:'Liberation Mono',monospace;font-size:13.4px;line-height:22px;color:#22c55e"><span style="display:inline-block;transform:scaleY(1.18)">530</span></div>
<div class="nw" style="left:1351.3px;width:200px;text-align:center;top:947.75px;font-family:'Liberation Mono',monospace;font-size:13.4px;line-height:22px;color:#f97316"><span style="display:inline-block;transform:scaleY(1.18)">2,100</span></div>
<div class="nw" style="left:1823.2px;width:200px;text-align:center;top:947.75px;font-family:'Liberation Mono',monospace;font-size:13.4px;line-height:22px;color:#ef4444"><span style="display:inline-block;transform:scaleY(1.18)">14,000</span></div>
<div class="nw" style="left:2296.1px;width:200px;text-align:center;top:947.75px;font-family:'Liberation Mono',monospace;font-size:13.4px;line-height:22px;color:#e8edf4"><span style="display:inline-block;transform:scaleY(1.18)">1,000</span></div>
<div class="nw" style="left:2713px;width:200px;text-align:center;top:947.75px;font-family:'Liberation Mono',monospace;font-size:13.4px;line-height:22px;color:#ef4444"><span style="display:inline-block;transform:scaleY(1.18)">6,000</span></div>
<div class="nw" style="left:3101.2px;width:200px;text-align:center;top:947.75px;font-family:'Liberation Mono',monospace;font-size:13.4px;line-height:22px;color:#e8edf4"><span style="display:inline-block;transform:scaleY(1.18)">6.0</span></div>
<div class="nw" style="left:3497.5px;width:200px;text-align:center;top:946.75px;font-size:14px;line-height:22px;font-weight:700;color:#06b6d4">ED</div>
<div class="a" style="left:55px;top:977.0px;width:3730px;height:1px;background:#232c3e"></div>
<div id="rn2" class="nw" style="left:67px;top:985.5px;font-size:13px;line-height:22px;font-weight:700;color:#ef4444">H<span style="font-size:9.5px;vertical-align:-1.5px">2</span> 수소</div>
<div class="nw" style="left:887px;width:200px;text-align:center;top:987.0px;font-family:'Liberation Mono',monospace;font-size:13.4px;line-height:22px;color:#64748b"><span style="display:inline-block;transform:scaleY(1.18)">-</span></div>
<div class="nw" style="left:1351.3px;width:200px;text-align:center;top:987.0px;font-family:'Liberation Mono',monospace;font-size:13.4px;line-height:22px;color:#64748b"><span style="display:inline-block;transform:scaleY(1.18)">-</span></div>
<div class="nw" style="left:1823.2px;width:200px;text-align:center;top:987.0px;font-family:'Liberation Mono',monospace;font-size:13.4px;line-height:22px;color:#64748b"><span style="display:inline-block;transform:scaleY(1.18)">-</span></div>
<div class="nw" style="left:2296.1px;width:200px;text-align:center;top:987.0px;font-family:'Liberation Mono',monospace;font-size:13.4px;line-height:22px;color:#64748b"><span style="display:inline-block;transform:scaleY(1.18)">-</span></div>
<div class="nw" style="left:2713px;width:200px;text-align:center;top:987.0px;font-family:'Liberation Mono',monospace;font-size:13.4px;line-height:22px;color:#64748b"><span style="display:inline-block;transform:scaleY(1.18)">-</span></div>
<div class="nw" style="left:3101.2px;width:200px;text-align:center;top:987.0px;font-family:'Liberation Mono',monospace;font-size:13.4px;line-height:22px;color:#ef4444"><span style="display:inline-block;transform:scaleY(1.18)">4.0</span></div>
<div class="nw" style="left:3497.5px;width:200px;text-align:center;top:986.0px;font-size:14px;line-height:22px;font-weight:700;color:#a855f7">G</div>
<div class="a" style="left:55px;top:1016.25px;width:3730px;height:1px;background:#232c3e"></div>
<div id="rn3" class="nw" style="left:67px;top:1024.75px;font-size:13px;line-height:22px;font-weight:700;color:#f97316">CH<span style="font-size:9.5px;vertical-align:-1.5px">4</span> LNG</div>
<div class="nw" style="left:887px;width:200px;text-align:center;top:1026.25px;font-family:'Liberation Mono',monospace;font-size:13.4px;line-height:22px;color:#64748b"><span style="display:inline-block;transform:scaleY(1.18)">-</span></div>
<div class="nw" style="left:1351.3px;width:200px;text-align:center;top:1026.25px;font-family:'Liberation Mono',monospace;font-size:13.4px;line-height:22px;color:#64748b"><span style="display:inline-block;transform:scaleY(1.18)">-</span></div>
<div class="nw" style="left:1823.2px;width:200px;text-align:center;top:1026.25px;font-family:'Liberation Mono',monospace;font-size:13.4px;line-height:22px;color:#64748b"><span style="display:inline-block;transform:scaleY(1.18)">-</span></div>
<div class="nw" style="left:2296.1px;width:200px;text-align:center;top:1026.25px;font-family:'Liberation Mono',monospace;font-size:13.4px;line-height:22px;color:#64748b"><span style="display:inline-block;transform:scaleY(1.18)">-</span></div>
<div class="nw" style="left:2713px;width:200px;text-align:center;top:1026.25px;font-family:'Liberation Mono',monospace;font-size:13.4px;line-height:22px;color:#64748b"><span style="display:inline-block;transform:scaleY(1.18)">-</span></div>
<div class="nw" style="left:3101.2px;width:200px;text-align:center;top:1026.25px;font-family:'Liberation Mono',monospace;font-size:13.4px;line-height:22px;color:#f97316"><span style="display:inline-block;transform:scaleY(1.18)">5.0</span></div>
<div class="nw" style="left:3497.5px;width:200px;text-align:center;top:1025.25px;font-size:14px;line-height:22px;font-weight:700;color:#a855f7">G</div>
<div class="a" style="left:55px;top:1055.5px;width:3730px;height:1px;background:#232c3e"></div>
<div id="rn4" class="nw" style="left:67px;top:1064.0px;font-size:13px;line-height:22px;font-weight:700;color:#22c55e">C<span style="font-size:9.5px;vertical-align:-1.5px">6</span>H<span style="font-size:9.5px;vertical-align:-1.5px">5</span>OH 페놀</div>
<div class="nw" style="left:887px;width:200px;text-align:center;top:1065.5px;font-family:'Liberation Mono',monospace;font-size:13.4px;line-height:22px;color:#22c55e"><span style="display:inline-block;transform:scaleY(1.18)">19</span></div>
<div class="nw" style="left:1351.3px;width:200px;text-align:center;top:1065.5px;font-family:'Liberation Mono',monospace;font-size:13.4px;line-height:22px;color:#f97316"><span style="display:inline-block;transform:scaleY(1.18)">29</span></div>
<div class="nw" style="left:1823.2px;width:200px;text-align:center;top:1065.5px;font-family:'Liberation Mono',monospace;font-size:13.4px;line-height:22px;color:#ef4444"><span style="display:inline-block;transform:scaleY(1.18)">57</span></div>
<div class="nw" style="left:2296.1px;width:200px;text-align:center;top:1065.5px;font-family:'Liberation Mono',monospace;font-size:13.4px;line-height:22px;color:#e8edf4"><span style="display:inline-block;transform:scaleY(1.18)">50</span></div>
<div class="nw" style="left:2713px;width:200px;text-align:center;top:1065.5px;font-family:'Liberation Mono',monospace;font-size:13.4px;line-height:22px;color:#ef4444"><span style="display:inline-block;transform:scaleY(1.18)">250</span></div>
<div class="nw" style="left:3101.2px;width:200px;text-align:center;top:1065.5px;font-family:'Liberation Mono',monospace;font-size:13.4px;line-height:22px;color:#e8edf4"><span style="display:inline-block;transform:scaleY(1.18)">1.8</span></div>
<div class="nw" style="left:3497.5px;width:200px;text-align:center;top:1064.5px;font-size:14px;line-height:22px;font-weight:700;color:#22c55e">S/SD</div>
<div class="a" style="left:55px;top:1094.75px;width:3730px;height:1px;background:#232c3e"></div>
<div id="rn5" class="nw" style="left:67px;top:1103.25px;font-size:13px;line-height:22px;font-weight:700;color:#eab308">C<span style="font-size:9.5px;vertical-align:-1.5px">7</span>H<span style="font-size:9.5px;vertical-align:-1.5px">8</span> 톨루엔</div>
<div class="nw" style="left:887px;width:200px;text-align:center;top:1104.75px;font-family:'Liberation Mono',monospace;font-size:13.4px;line-height:22px;color:#22c55e"><span style="display:inline-block;transform:scaleY(1.18)">67</span></div>
<div class="nw" style="left:1351.3px;width:200px;text-align:center;top:1104.75px;font-family:'Liberation Mono',monospace;font-size:13.4px;line-height:22px;color:#f97316"><span style="display:inline-block;transform:scaleY(1.18)">560</span></div>
<div class="nw" style="left:1823.2px;width:200px;text-align:center;top:1104.75px;font-family:'Liberation Mono',monospace;font-size:13.4px;line-height:22px;color:#ef4444"><span style="display:inline-block;transform:scaleY(1.18)">3,700</span></div>
<div class="nw" style="left:2296.1px;width:200px;text-align:center;top:1104.75px;font-family:'Liberation Mono',monospace;font-size:13.4px;line-height:22px;color:#e8edf4"><span style="display:inline-block;transform:scaleY(1.18)">300</span></div>
<div class="nw" style="left:2713px;width:200px;text-align:center;top:1104.75px;font-family:'Liberation Mono',monospace;font-size:13.4px;line-height:22px;color:#ef4444"><span style="display:inline-block;transform:scaleY(1.18)">500</span></div>
<div class="nw" style="left:3101.2px;width:200px;text-align:center;top:1104.75px;font-family:'Liberation Mono',monospace;font-size:13.4px;line-height:22px;color:#e8edf4"><span style="display:inline-block;transform:scaleY(1.18)">1.1</span></div>
<div class="nw" style="left:3497.5px;width:200px;text-align:center;top:1103.75px;font-size:14px;line-height:22px;font-weight:700;color:#eab308">FE</div>
<div id="t_foot" class="nw" style="left:55px;top:1143.5px;font-size:9.8px;line-height:20px;color:#7b8597">※ AEGL: 60분 기준 / ERPG: 1시간 노출 / IDLH: 30분 / LFL: 폭발하한</div>
</body>
</html>
